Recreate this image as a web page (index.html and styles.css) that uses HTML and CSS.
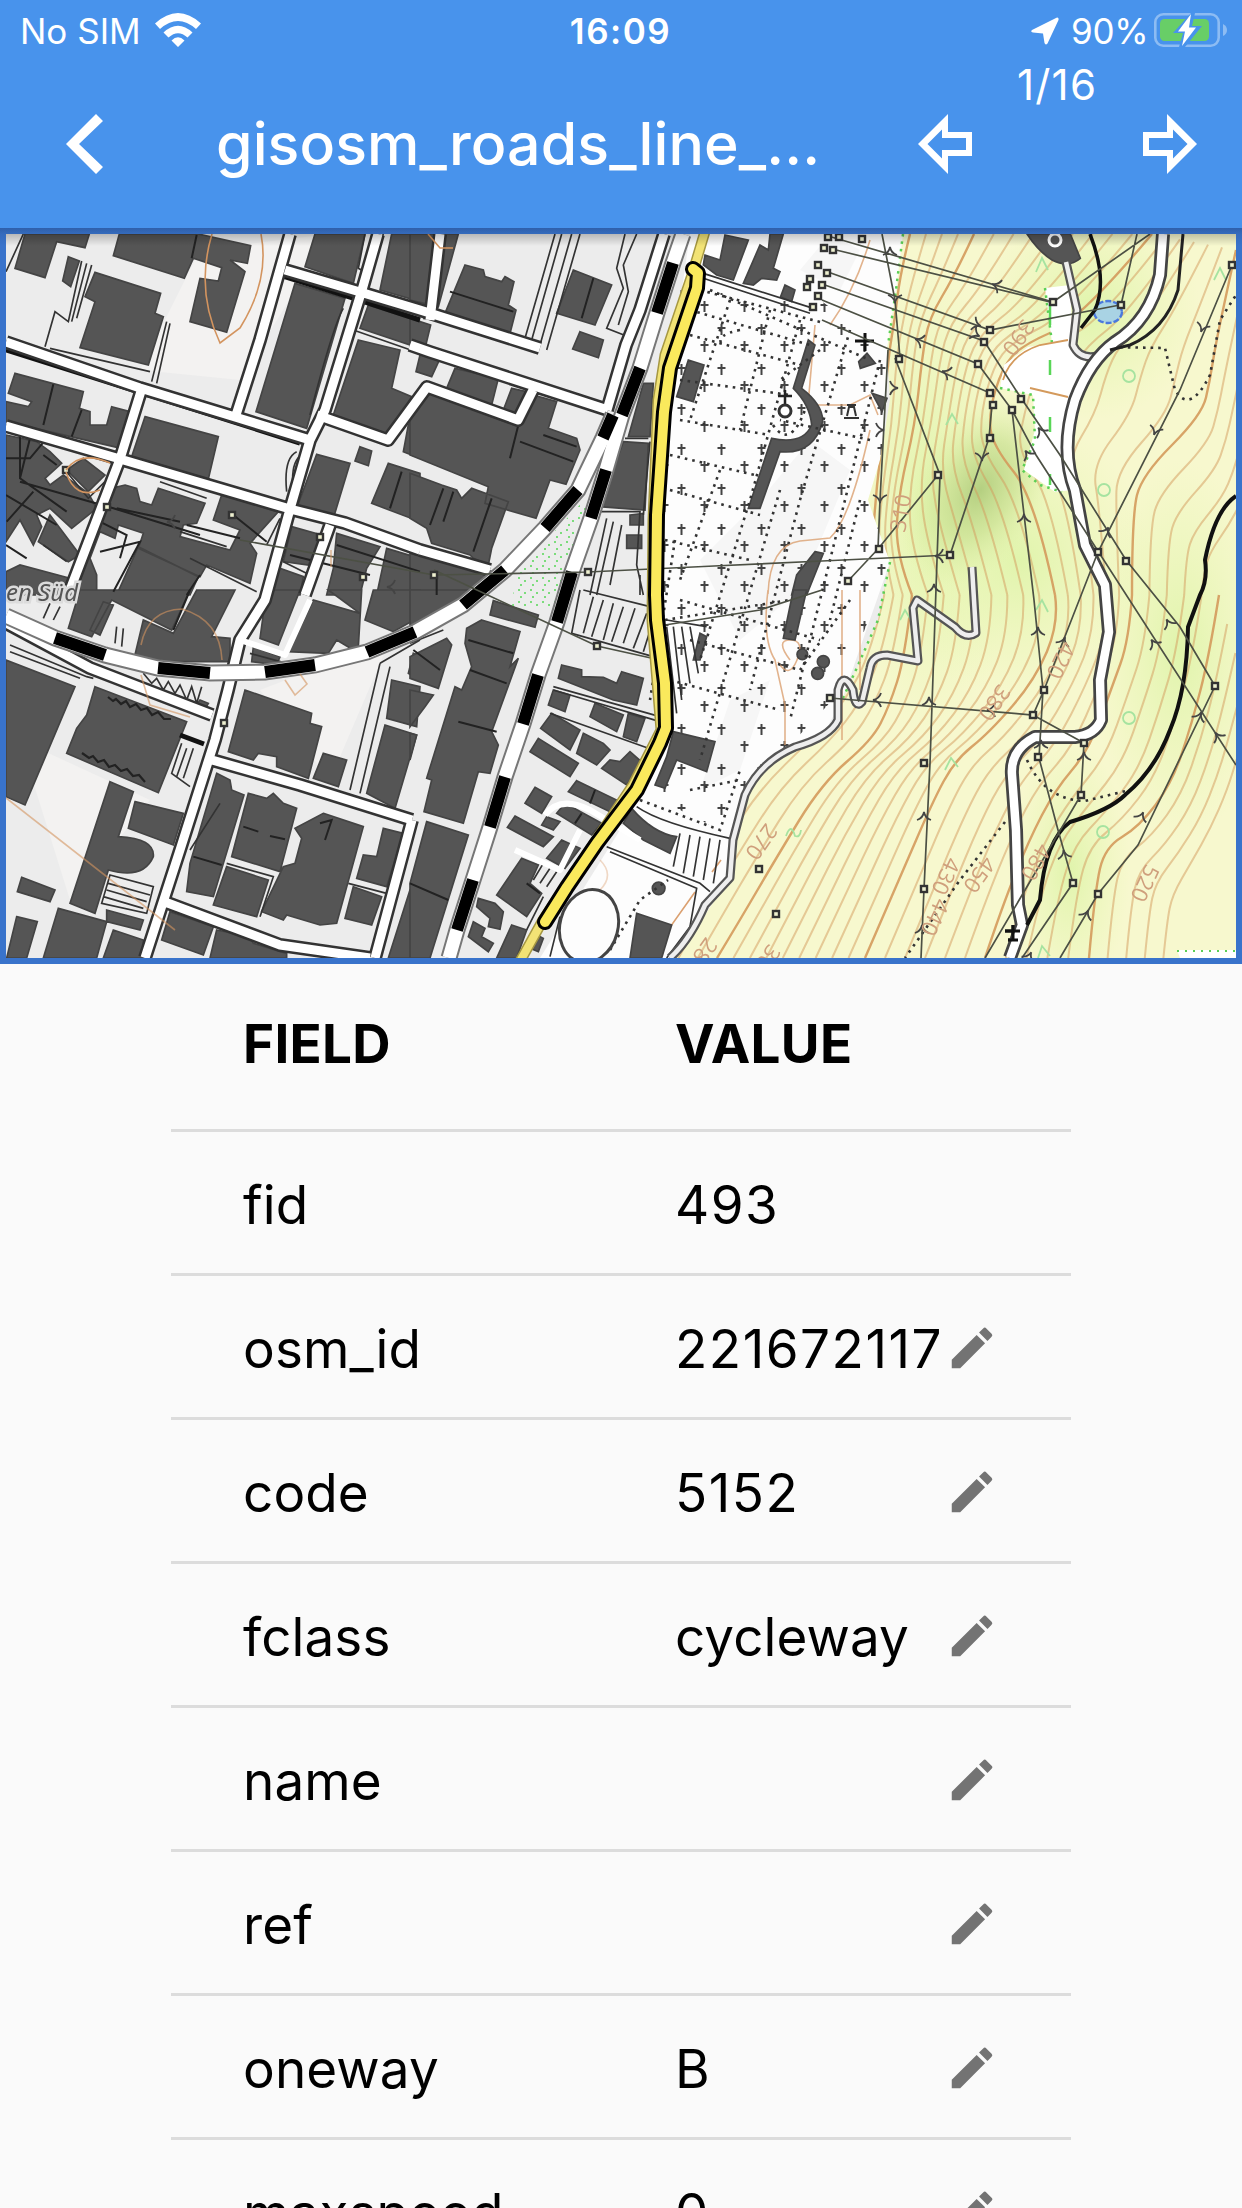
FILE: index.html
```html
<!DOCTYPE html>
<html lang="en">
<head>
<meta charset="utf-8">
<title>gisosm_roads_line</title>
<link rel="stylesheet" href="styles.css">
</head>
<body>
<header class="appbar">
  <div class="status">
    <div class="status-left">
      <span class="carrier">No SIM</span>
      <svg class="wifi" viewBox="0 0 46 34"><path d="M0 10.5Q23-10.500 46 10.500L41 16Q23 0 5 16ZM8.500 19.500Q23 6 37.500 19.500L32.500 24.500Q23 16 13.500 24.500ZM16.500 27.500Q23 21 29.500 27.500L23 34Z" fill="#fff"/></svg>
    </div>
    <span class="clock">16:09</span>
    <div class="status-right">
      <svg class="loc" viewBox="0 0 28 28"><path d="M1 13Q-1 15 2 15.500L12 16.500L13.500 26Q14.500 28.500 16.500 26.500L27.500 3Q28 0 25.500 .7Z" fill="#fff"/></svg>
      <span class="percent">90%</span>
      <svg class="battery" viewBox="0 0 74 34"><rect x="1.300" y="1.300" width="63.400" height="31.400" rx="8" fill="none" stroke="#8dbcf3" stroke-width="2.600"/><path d="M69 11Q73 13 73 17T69 23Z" fill="#8dbcf3"/><rect x="6" y="6" width="49" height="22" rx="4.500" fill="#68ce67"/><path d="M37 0L19 20H29L25 34H31L48 13H38L41 0Z" fill="#4893ec"/><path d="M37 1L24 18.500H31L28 33L42 14.500H35Z" fill="#fff"/></svg>
    </div>
  </div>
  <div class="nav">
    <svg class="back" viewBox="0 0 37 60"><path d="M0 30L30 0L37 7L13 30L37 53L30 60Z" fill="#fff"/></svg>
    <h1 class="title">gisosm_roads_line_...</h1>
    <svg class="arrow" viewBox="0 0 54 60"><path fill-rule="evenodd" d="M0 30L30 0V18H54V42H30V60ZM9.500 30L24 44.500V36H48V24H24V15.500Z" fill="#fff"/></svg>
    <svg class="arrow next" viewBox="0 0 54 60"><path fill-rule="evenodd" d="M54 30L24 0V18H0V42H24V60ZM44.500 30L30 44.500V36H6V24H30V15.500Z" fill="#fff"/></svg>
  </div>
  <span class="counter">1/16</span>
</header>

<section class="map-frame">
<svg class="map" viewBox="6 234 1230 724">
<defs>
  <pattern id="crosses" x="717" y="364" width="40" height="40" patternUnits="userSpaceOnUse"><path d="M4.500 0V11M0.500 4H8.500M27.500 17V28M23.500 21H31.500" stroke="#444" stroke-width="2" fill="none"/></pattern>
  <pattern id="scrub" width="12" height="12" patternUnits="userSpaceOnUse"><path d="M2 2h2M8 5h2M4 9h2" stroke="#7bdc7b" stroke-width="1.800"/></pattern>
  <radialGradient id="hill"><stop offset="0" stop-color="#b4cf80"/><stop offset=".5" stop-color="#cce295" stop-opacity=".75"/><stop offset="1" stop-color="#dff0a8" stop-opacity="0"/></radialGradient>
  <radialGradient id="lush"><stop offset="0" stop-color="#e0f4ac"/><stop offset="1" stop-color="#e8f6b4" stop-opacity="0"/></radialGradient>
  <linearGradient id="shade" x2="0" y2="1"><stop offset="0" stop-opacity=".22"/><stop offset="1" stop-opacity="0"/></linearGradient>
  <clipPath id="woodclip"><path id="woodshape" d="M903 234L896 290L887 349L890 400L880 460L868 500L882 540L890 562L878 620L855 672L842 700L838 725L822 737L795 747L770 758L748 790L735 830L728 880L705 915L673 958H1236V234Z"/></clipPath>
  <g id="node"><rect x="-3" y="-3" width="6" height="6" fill="#eef0d0" stroke="#333" stroke-width="2.400"/></g>
  <g id="chev"><path d="M-7 5Q-1 3 0-3Q1 3 7 5" fill="none" stroke="#444" stroke-width="1.800"/></g>
</defs>
<rect x="6" y="234" width="1230" height="724" fill="#ececec"/>
<path d="M200 250L330 234L240 380L140 370ZM20 740L150 800L70 900ZM260 690L390 640L330 780Z" fill="#f3f2f1"/>
<path d="M690 234H910L888 349L880 500L890 562L842 700L822 737L770 758L735 830L728 880L673 958H540L645 790L668 728L657 620L658 500L670 370Z" fill="#fdfdfd"/>
<path d="M760 500L810 440L850 470L800 590L740 640L700 560ZM730 700L770 680L740 770L700 790ZM830 234L860 250L840 290L800 270Z" fill="#f6f6f6"/>
<path d="M680 290L820 300L888 350L880 500L890 562L842 690L790 745L745 790L730 835L660 800L672 740L657 610L660 510Z" fill="url(#crosses)"/>
<path d="M592 492L574 545L556 606H512L516 572Z" fill="url(#scrub)"/>

<!-- woodland and contours -->
<use href="#woodshape" fill="#f7f8ce"/>
<g clip-path="url(#woodclip)">
  <ellipse cx="930" cy="500" rx="85" ry="240" fill="url(#lush)"/>
  <ellipse cx="1090" cy="310" rx="110" ry="110" fill="url(#lush)"/>
  <ellipse cx="1020" cy="560" rx="130" ry="140" fill="url(#lush)"/>
  <ellipse cx="1180" cy="650" rx="90" ry="190" fill="url(#lush)"/>
  <ellipse cx="1070" cy="870" rx="60" ry="130" fill="url(#lush)"/>
  <ellipse cx="980" cy="490" rx="65" ry="105" fill="url(#hill)" transform="rotate(30 980 490)"/>
  <g id="contours" fill="none" stroke="#d49a5c"></g>
</g>
<path d="M1045 288L1070 285L1073 345L1085 358L1088 372L1066 430L1066 475L1072 490L1055 492L1024 470L1035 430L1033 395L1000 388L1004 365L1028 347L1052 343Z" fill="#fff"/>
<path d="M1045 288L1052 343M1000 388L1033 395L1035 440L1022 470L1040 485L1062 492M903 234L896 290L888 345M890 562L878 620L855 672L842 700" fill="none" stroke="#5ccf55" stroke-width="2.500" stroke-dasharray="2.500 5"/>
<path d="M1050 305V325M1050 360V375M1050 417V432M1050 474V485" stroke="#59d657" stroke-width="2.500"/>
<path d="M1003 380Q1010 355 1040 345L1068 340M1030 388L1068 397" fill="none" stroke="#d49a5c" stroke-width="1.800"/>
<path d="M1177 950H1236V958H1180Z" fill="#fff"/><path d="M1177 951H1236" stroke="#5ccf55" stroke-width="2" stroke-dasharray="2 6"/>
<g fill="none" stroke="#dba070" stroke-width="1.600">
  <path d="M815 325L808 405H850L870 395L878 415M768 594Q770 545 800 541L830 538Q850 520 870 430M768 590Q762 640 775 660L785 705V745M790 660Q775 640 790 640T797 660T778 662M870 240Q855 290 830 325M842 590V740M860 590V690" stroke-opacity=".8"/>
  <path d="M600 860Q615 875 600 890Q580 930 560 925" stroke-opacity=".4"/><path d="M721 860L712 872M695 892L668 930L660 958"/>
</g>
<ellipse cx="1108" cy="312" rx="14" ry="11" fill="#a9d3e4" stroke="#4a78dd" stroke-width="2.400" stroke-dasharray="6 2"/>
<g fill="none" stroke="#a6e3a0" stroke-width="1.800"><circle cx="1129" cy="376" r="6"/><circle cx="1104" cy="490" r="6"/><circle cx="1129" cy="718" r="6"/><circle cx="1103" cy="832" r="6"/><path d="M1214 280L1220 268L1226 280M1036 272L1042 258L1048 270M946 425L952 414L958 424M1036 610L1042 600L1048 612M900 620L905 610L911 620M786 836q5-14 9 0q5 2 6-6M945 770l6-12 7 9M1038 958l4-12 8 10"/></g>

<!-- buildings -->
<g class="bld" transform="translate(0 225) scale(.33333)">
  <path d="M75 27H268L255 68L170 50L135 158L45 130ZM205 95L238 108L212 185L188 168ZM358 27H595L752 62L742 115L690 105L735 140L680 322L570 290L600 160L655 168L665 128L580 100L553 160L340 92ZM285 142L482 205L465 265L490 275L445 420L240 368L285 230L255 215ZM945 27H1095L1060 175L915 125ZM1175 27H1260V230L1140 195ZM1105 240L1260 290V370L1080 310ZM885 175L1035 220L920 610L768 560ZM1075 345L1200 375L1175 490L1235 515L1165 635L1000 570ZM45 445L250 500L238 550L270 560L270 600L320 600L335 545L390 560L355 668L18 590V530L85 545L95 530L25 505ZM435 575L655 635L625 762L395 695ZM950 688L1050 715L1000 880L890 850ZM1080 665L1115 678L1105 722L1065 708ZM1165 715L1260 745V890L1115 835ZM1225 600L1260 560V700L1210 680Z"/>
  <path d="M18 630L110 650L150 680L185 715L135 760L150 780L190 750L265 805L290 850L215 910L150 850L110 870L125 905L100 960L60 885L18 950ZM200 735L250 700L315 750L265 800ZM375 780L410 790L420 830L455 840L475 790L615 835L590 895L550 900L540 935L690 975L720 915L640 885L665 810L835 860L750 955L770 985L750 1075L620 1020L600 1055L415 970L430 925L355 900L345 940L300 920L270 1000L290 1050V1110H18V1040L60 1020L210 1060L290 880L335 790ZM150 870L240 990L205 1010L115 950ZM875 905L965 930L925 1020L850 1010ZM1010 925L1140 965L1100 1030L1080 1110H980L1000 1030ZM1160 970L1260 1000V1110H1130ZM840 1030L910 1055L900 1110H800ZM415 965L595 1055L570 1110H350Z"/>
</g>
<g class="bld" transform="translate(410 225) scale(.33333)">
  <path d="M0 27H145L85 245L0 225ZM165 120L220 135L225 155L275 170L285 155L312 170L295 240L318 255L300 325L105 265ZM0 280L62 300L45 370L0 355ZM490 135L605 180L555 300L440 265ZM510 320L580 345L565 398L488 372ZM30 390L88 405L65 455L18 440ZM135 430L265 460L245 540L110 490ZM305 490L350 500L325 575L280 555ZM370 510L440 530L415 610L500 640L510 675L468 778L420 765L378 880L225 835L235 785L0 690V560L50 500L325 605ZM0 745L95 780L140 795L155 820L185 790L295 830L245 970L235 1020L190 1000L180 990L65 955L50 910L0 880ZM945 30L1015 45L970 165L920 150L880 120L885 90L930 105ZM1080 27H1120L1090 130L1110 140L1100 165L1055 160L1030 180L1000 175L1050 60L1075 75ZM1125 180L1155 195L1145 230L1112 215ZM1195 345L1215 360L1175 490Q1240 540 1238 590Q1210 690 1110 680L1050 850H1015L1085 640Q1180 660 1205 600Q1200 540 1150 490ZM835 405L882 420L850 530L800 515ZM700 475H730L720 635H655ZM640 650L715 655L705 855L570 845ZM660 870L700 865V900H660ZM650 930H695V970H650ZM1215 980L1240 985L1190 1110H1145L1160 1050ZM0 985L270 1045L200 1110H0Z"/>
</g>
<g class="bld" transform="translate(822 225) scale(.33333)"><path d="M615 27H745L775 100Q740 130 690 105Q650 80 615 27ZM110 410L135 385L160 415L115 430ZM150 505L195 520L180 560Z"/></g>
<g class="bld" transform="translate(0 590) scale(.33333)">
  <path d="M240 0H570L515 120L335 30L275 140L205 115ZM590 0H705L635 140L690 145V215H400L430 90L520 130ZM310 35L340 45L300 135L270 120ZM800 0H900L835 165L780 145ZM985 0H1085L1075 170L1060 180L1010 150L985 190L865 185L940 30L1080 70ZM1120 0H1260V80L1180 125L1095 90ZM18 210L225 290L75 645L18 620ZM285 290L560 395L475 608L200 490L230 415L260 375ZM330 575L400 605L355 740Q465 745 460 800Q430 870 325 840L285 970L210 940ZM405 635L550 670L520 765L385 715ZM65 862L165 900L150 935L52 905ZM50 980L112 995L80 1104H20ZM175 955L320 995L290 1104H130ZM320 960L430 990L420 1020L320 995ZM735 300L935 370L930 400L965 410L925 565L830 530V500L775 490L760 510L685 485ZM970 490L1040 510L1015 590L940 565ZM1175 270L1260 290L1250 410L1160 385ZM1155 405L1250 435L1185 655L1100 610ZM650 550L690 570L695 600L732 615L640 920L560 905L570 820ZM745 610L800 625L820 610L850 640L890 655L840 845L695 800ZM680 830L805 870L770 980L640 945ZM970 670L1090 710L1010 1000L960 1005L860 975L850 990L785 965L850 830L885 820L905 745L885 715ZM1150 715L1210 730L1160 890L1070 865L1090 795L1130 800ZM1060 890L1145 920L1115 1005L1035 985ZM1230 900L1260 890V1104H1165ZM510 965L640 1010L610 1095L485 1050ZM650 1020L750 1040L760 1060L860 1090V1104H630ZM340 1020L430 1050V1104H310ZM1240 190L1260 200V270L1225 250ZM600 330L625 340L610 365L585 350ZM760 170L840 200L830 225L755 215Z"/>
</g>
<g class="bld" transform="translate(410 590) scale(.33333)">
  <path d="M0 0H240L160 45L0 110ZM250 32L385 75L375 112L240 75ZM215 90L330 125L300 230L325 205L245 425L265 465L240 550L205 545L160 700L42 665L65 570L50 565L135 290L155 300L185 230L165 160L170 115ZM0 200L110 145L125 165L85 295L0 265ZM0 300L70 315L45 350L0 410ZM0 430L20 435L0 510ZM50 695L175 735L60 1104H0V880ZM455 225L515 240V260L580 262L620 280L635 245L700 265L680 345L610 330L445 265ZM430 300L480 315L465 365L415 345ZM555 340L640 375L620 425L540 380ZM655 370L705 385L680 455L640 440ZM425 370L510 420L480 480L392 415ZM520 430L580 460L600 480L560 525L500 490ZM385 445L505 520L480 560L360 485ZM660 485L700 520L650 585L575 535L600 510L630 515ZM375 592L425 620L395 670L345 640ZM500 572L640 640L620 675L475 605ZM465 640L575 700L545 735L440 670ZM315 678L430 740L400 770L292 712ZM410 680L450 695L430 720L395 705ZM455 750L510 775L465 835L410 805ZM335 805L385 825L360 880L395 910L350 980L260 915ZM205 925L255 940L280 965L270 1018L235 1010L240 985L200 950ZM190 995L225 1015L215 1040L250 1060L235 1085L175 1040ZM305 1005L350 1020L320 1104H260ZM790 425L915 455L890 545L800 510L765 595L735 585L770 500ZM665 655Q730 730 800 740L780 790L700 750L640 700ZM680 970L785 1005L755 1104H660ZM370 1030L400 1045L385 1085L360 1075ZM1150 0H1190L1155 150L1120 145ZM870 130L890 140L870 210H850Z"/>
  <circle cx="1177" cy="193" r="16"/><circle cx="1240" cy="215" r="18"/><circle cx="1223" cy="250" r="18"/><circle cx="746" cy="895" r="19"/>
</g>

<!-- building partitions -->
<g class="part" fill="none">
  <path transform="translate(0 225) scale(.33333)" d="M160 478L130 600M245 555L215 635M590 30L575 100M60 635V760L200 860M18 700H90L140 640M18 810L170 900M90 640L60 760M60 770L340 850L600 930M280 880L380 930L360 1000M350 850L540 890M300 980L420 950L340 1100M560 900L720 940M600 1050L560 1110M1205 740L1170 850M1010 960L1260 1040M870 990L1110 1050M18 960L80 1000M100 800L20 890M130 690L170 720M700 870L800 950"/>
  <path transform="translate(410 225) scale(.33333)" d="M120 200L310 260M550 160L515 280M330 650L490 710M400 630L500 665M325 600L300 700M130 800L100 890M100 790L60 900M245 820L190 980M80 1050V1110"/>
  <path transform="translate(0 590) scale(.33333)" d="M570 0L520 120M580 800L665 825M730 710L775 725M810 738L855 748M960 700L995 690L975 750"/>
  <path transform="translate(410 590) scale(.33333)" d="M175 150L310 190M180 240L290 280M145 395L260 425M0 880L115 930M10 180L90 240M555 600L540 640M515 670L495 700M350 880L390 910"/>
</g>
<g fill="none" stroke="#111" stroke-width="5"><path d="M6 350L300 443M283 276L350 297L420 320M180 735L204 744"/></g>
<path d="M108 697l5 4 3-2 5 5 5-3 4 6 6-3 5 6 6-2 5 7 6-3 6 7 7 0M82 753l7 5 4-2 5 6 6-2 5 7 6-2 6 6 6-2 6 7 6-1 6 7" fill="none" stroke="#222" stroke-width="2.200"/>

<!-- minor lines, car parks -->
<g class="thin" fill="none">
  <path transform="translate(0 225) scale(.33333)" d="M245 108L205 290L165 260L135 365M260 115L215 290M275 120L230 280M500 290L455 470M510 295L470 475M150 370L450 440M480 750L640 800M480 770L620 820M18 140L70 27M1060 315L1260 385M860 800Q850 700 890 680M880 800Q870 710 905 690M930 570Q1000 300 1030 250M200 740L265 820L315 770M130 960L200 1010M1095 27L1075 130L1110 150L1150 27M540 920L680 965M570 1000L770 1100M800 960L840 880M850 1010L930 1050"/>
  <path transform="translate(410 225) scale(.33333)" d="M435 27L345 340M455 27L365 345M485 27L390 360M510 27L410 375M645 27L620 130L640 190L590 310L655 335M680 27L640 120L655 200L625 300M720 650L700 870M645 640H715M590 880L540 1110M610 890L560 1110M635 900L600 1080M570 860H690L680 1020L700 1110M690 1050V1110M880 145L1210 250M880 160L1200 265"/>
  <path transform="translate(0 590) scale(.33333)" d="M30 165L260 260L280 265M30 185L240 265M350 110L345 160M370 115L365 170M150 40L130 85M180 50L160 90M430 250L455 280L470 265L490 300L505 275L525 310L540 285L560 330L575 290L590 340L605 290M545 460L515 550L570 590M560 475L530 560M580 475L550 565M330 855L460 890L440 970L305 940ZM325 880L450 915M320 900L440 935M310 920L430 955M1140 220L1050 600M1170 230L1080 610M1140 220L1260 150M660 640L570 780M750 190L860 220M680 820L820 860L780 980M1045 880L1160 910"/>
  <path transform="translate(410 590) scale(.33333)" d="M510 0L485 130L730 200M550 20L520 130M580 30L545 140M610 40L580 150M640 50L605 155M675 55L640 160M710 70L670 175M730 90L700 185M520 0L720 50M770 110L800 370M790 110L815 330M815 110L840 280M840 110L865 250M770 90L890 110M430 290L750 380M420 370L730 480M430 300L740 392M590 770L870 880L900 905M600 785L860 895L840 1010L770 1104M680 650Q750 700 960 745M810 730L790 830M840 735L820 850M870 740L850 860M900 745L880 870M930 750L910 880M0 160L100 120M350 1020L400 920M420 1100L450 980M370 870L400 820M390 880L420 835M410 890L440 845"/>
</g>

<!-- streets -->
<g class="streets" fill="none">
  <g id="st">
    <path d="M6 342L140 388L235 417L310 440M6 426L120 459L290 509L345 523L420 550M290 234L260 340L236 415M285 270L360 292L420 310L540 348M378 234L362 290L325 410L310 440L290 509L265 600L240 640L228 690L215 740L180 850L145 958M142 388L120 459L70 590M410 345L430 352L608 410M440 234L430 320M317 415L388 440L427 387L518 420L533 390M6 623L90 668L212 715M212 760L300 785L412 820M165 902L280 945L370 958M412 820L375 958M330 525L305 595M420 550L490 570M664 234L640 310L626 345L607 410"/>
  </g>
  <use href="#st" class="inner"/>
  <path class="alley" d="M240 640L285 655L310 600M545 815Q560 795 590 810L640 840M515 850L560 870L580 830"/>
</g>

<!-- cemetery paths -->
<g fill="none" stroke="#333" stroke-width="2.600" stroke-dasharray="2.600 5">
  <path d="M700 290L820 322M690 310L810 345M690 335L800 365M680 380L790 395M680 420L770 435M670 455L755 475M670 490L760 515M665 540L750 560M680 600L820 640M690 640L800 670M670 680L780 710M665 620L790 600M730 300L690 420M770 310L740 430M800 320L750 500L700 660M850 330L800 500L750 690M880 360L830 560L790 720M720 470L680 580M780 490L700 760M860 500L830 620M870 440L780 420M740 330q-25 5-18 15M675 540L650 700M820 350L780 380M800 670L850 600M710 290L870 360M690 790L740 780M640 800L720 830L740 770M610 950L640 900L668 880"/>
  <path d="M773 425Q790 450 805 410M1105 347L1165 348L1175 390Q1190 415 1210 375L1220 320L1236 295M1027 760Q1045 800 1085 801L1130 790M1005 822L960 880L905 958"/>
</g>
<path d="M785 390V405M778 396H792" stroke="#222" stroke-width="2.500"/><circle cx="785" cy="411" r="6" fill="#fff" stroke="#333" stroke-width="3"/>
<path d="M865 333V351M855 341H874M1013 925V941M1005 931H1020M1008 940H1018" stroke="#111" stroke-width="3"/>
<path d="M844 418h15M847 416l2-9h5l2 9M847 405h9" fill="none" stroke="#333" stroke-width="2"/>
<circle cx="1055" cy="240" r="6" fill="#555" stroke="#fff" stroke-width="3"/>

<!-- railways -->
<g fill="none">
  <g class="rail"><path id="r1" d="M683 234L673 263L657 313L640 368L622 415L606 470L591 518L572 572L557 622L538 675L523 724L505 777L490 827L473 880L457 930L449 958"/><path id="r2" d="M6 616L55 638L105 655L158 668L210 673L265 672L315 665L367 652L415 632L463 605L505 570L545 528L578 490L603 438L613 415"/></g>
  <g class="railbed"><use href="#r1"/><use href="#r2"/></g>
  <path class="sleep" d="M673 263L657 313M640 368L622 415M606 470L591 518M572 572L557 622M538 675L523 724M505 777L490 827M473 880L457 930M55 638L105 655M158 668L210 673M265 672L315 665M367 652L415 632M463 605L505 570M545 528L578 490M603 438L613 415"/>
</g>

<!-- hill roads -->
<g fill="none" stroke-linejoin="round">
  <g stroke="#555" stroke-width="9"><path id="hr" d="M972 567L976 633Q966 640 955 627L917 600L913 608L918 661L887 655Q872 655 870 668L862 702Q855 710 853 690Q843 670 838 690L838 720Q830 737 795 747Q760 762 745 795L733 840L730 878L705 905Q690 940 670 958M1066 262L1077 310L1073 345Q1080 360 1097 356"/></g><use href="#hr" stroke="#eee" stroke-width="4.500"/>
  <g stroke="#444" stroke-width="14"><path id="mr" d="M1163 234L1160 275Q1150 320 1115 342Q1090 360 1075 400Q1060 450 1075 490L1085 545L1105 585L1109 632L1100 680L1101 720Q1095 735 1075 737L1035 737Q1010 750 1012 775L1016 830L1018 905L1022 925L1010 958"/></g><use href="#mr" stroke="#fff" stroke-width="8.500"/>
  <path d="M1090 234Q1108 280 1095 310L1081 328" stroke="#111" stroke-width="3.500"/><path d="M1183 234L1178 290Q1165 330 1130 345L1110 350" stroke="#222" stroke-width="3"/>
  <path d="M1236 496Q1215 510 1205 560Q1208 580 1200 595L1188 627Q1187 690 1170 730Q1155 770 1125 795Q1110 810 1070 822Q1045 840 1040 900L1027 925" stroke="#111" stroke-width="4"/>
</g>
<path d="M1013 925V941M1005 931H1020M1008 940H1018" stroke="#111" stroke-width="3"/>
<ellipse cx="589" cy="926" rx="29" ry="37" transform="rotate(15 589 926)" fill="#fdfdfd" stroke="#444" stroke-width="3"/>

<!-- power lines -->
<g fill="none" stroke="#4c5044" stroke-width="1.700">
  <path d="M828 236L1053 302M832 249L1050 302M828 272L990 330L1120 305M822 284L984 341L1021 398L1060 455L1126 560L1180 627L1215 686M822 300L978 364L1012 410L1036 455L1236 765M822 320L990 393M895 358L940 475L937 560L930 763L924 889L921 958M888 350L880 500L878 549L848 581M822 561L950 555M938 475L878 549M992 405L989 438L950 555M1012 410L1020 480L1034 600L1043 690L1039 758L1058 830L1073 883L1022 958M1232 265L1180 390L1098 552L1044 690L1033 715L830 698M1033 715L1084 743L1081 795L985 958M1215 686L1138 845L1098 894L1060 958M1053 302L1150 234M1137 234L1121 305M882 234L895 300L900 358M434 575L588 572L714 566L822 561M434 570L597 646L660 660M240 540L434 575M665 625L760 610L822 590"/>
</g>
<g id="marks"></g>

<!-- labels -->
<g class="elev"><text transform="translate(1023 318) rotate(125)">390</text><text transform="translate(905 533) rotate(-80)">310</text><text transform="translate(766 822) rotate(125)">270</text><text transform="translate(706 936) rotate(125)">280</text><text transform="translate(769 943) rotate(125)">300</text><text transform="translate(999 683) rotate(125)">380</text><text transform="translate(1062 640) rotate(115)">420</text><text transform="translate(947 856) rotate(115)">430</text><text transform="translate(984 855) rotate(125)">450</text><text transform="translate(936 897) rotate(115)">440</text><text transform="translate(1039 842) rotate(120)">480</text><text transform="translate(1146 863) rotate(115)">520</text></g>
<g fill="none" stroke="#d3945f" stroke-width="1.600"><path d="M212 234Q195 290 220 343L240 328Q270 280 261 234M66 470Q80 450 110 463M66 472Q75 500 100 490M428 234L440 248L453 248"/><path d="M141 645Q148 610 182 609Q220 620 222 660M141 675L150 705L190 717M285 680L295 695L307 684L300 674M6 798L175 930M331 550V567" stroke-opacity=".6"/></g>
<text class="place" x="6" y="601">en Süd</text>

<!-- selected way -->
<g fill="none" stroke-linejoin="round" stroke-linecap="round">
  <path d="M706 228L692 275L665 355L658 400L653 520L652 620L661 730L633 785L543 920L518 965" stroke="#a69842" stroke-width="11"/>
  <path d="M706 228L692 275L665 355L658 400L653 520L652 620L661 730L633 785L543 920L518 965" stroke="#f2e375" stroke-width="8"/>
  <path class="way-edge" d="M693 269L698 273L697 288L670 368L664 412L657 515L656 595L657 620L665 683L666 728L660 743L637 790L597 843L567 887L545 922"/>
  <path class="way" d="M693 269L698 273L697 288L670 368L664 412L657 515L656 595L657 620L665 683L666 728L660 743L637 790L597 843L567 887L545 922"/>
</g>
<rect x="6" y="234" width="1230" height="12" fill="url(#shade)"/>
</svg>
</section>

<main class="table">
  <div class="row head"><span>FIELD</span><span>VALUE</span></div>
  <div class="row"><span>fid</span><span class="num">493</span></div>
  <div class="row"><span>osm_id</span><span class="num">221672117</span><svg class="edit" viewBox="0 0 24 24"><path id="pencil" d="M3 17.250V21h3.750L17.810 9.940l-3.750-3.750L3 17.250zM20.710 7.040a1 1 0 0 0 0-1.410l-2.340-2.340a1 1 0 0 0-1.410 0l-1.830 1.830 3.750 3.750 1.830-1.830z"/></svg></div>
  <div class="row"><span>code</span><span class="num">5152</span><svg class="edit" viewBox="0 0 24 24"><use href="#pencil"/></svg></div>
  <div class="row"><span>fclass</span><span>cycleway</span><svg class="edit" viewBox="0 0 24 24"><use href="#pencil"/></svg></div>
  <div class="row"><span>name</span><span></span><svg class="edit" viewBox="0 0 24 24"><use href="#pencil"/></svg></div>
  <div class="row"><span>ref</span><span></span><svg class="edit" viewBox="0 0 24 24"><use href="#pencil"/></svg></div>
  <div class="row"><span>oneway</span><span>B</span><svg class="edit" viewBox="0 0 24 24"><use href="#pencil"/></svg></div>
  <div class="row"><span>maxspeed</span><span class="num">0</span><svg class="edit" viewBox="0 0 24 24"><use href="#pencil"/></svg></div>
</main>
<script src="map.js"></script>
</body>
</html>
```
FILE: styles.css
```css
* { box-sizing: border-box; }
body { margin: 0; width: 1242px; height: 2208px; overflow: hidden; background: #fafafa; color: #000; font-family: Inter, "Liberation Sans", sans-serif; }
svg { display: block; }

.appbar { position: relative; height: 228px; background: #4893ec; color: #fff; }
.status { display: grid; grid-template-columns: 1fr auto 1fr; height: 60px; padding: 0 14px 0 20px; font-size: 35px; line-height: 63px; }
.status-left { display: flex; align-items: flex-start; }
.carrier { width: 135px; white-space: nowrap; }
.wifi { width: 46px; height: 34px; margin-top: 13px; }
.clock { font-weight: 600; letter-spacing: 1.5px; margin-left: -7px; }
.status-right { display: flex; justify-content: flex-end; align-items: flex-start; }
.loc { width: 28px; height: 28px; margin: 17px 12px 0 0; }
.percent { width: 83px; white-space: nowrap; letter-spacing: -.3px; }
.battery { width: 74px; height: 34px; margin-top: 13px; }
.nav { display: flex; align-items: center; height: 168px; padding: 0 45px 0 66px; }
.back { width: 37px; height: 60px; }
.title { width: 631px; margin: 0 71px 0 113px; font-size: 59px; font-weight: 500; line-height: 80px; letter-spacing: .1px; white-space: nowrap; }
.arrow { width: 54px; height: 60px; flex: none; }
.next { margin-left: 171px; }
.counter { position: absolute; left: 1017px; top: 60px; font-size: 42px; line-height: 50px; letter-spacing: 1.2px; }

.map-frame { height: 736px; padding: 6px; background: linear-gradient(#2f60ab, #356bbd 6px, #3973cb 18px); }
.map { width: 1230px; height: 724px; filter: blur(.5px); }
.bld { fill: #555; stroke: #444; stroke-width: 5px; }
.part { stroke: #222; }
.part path { stroke-width: 6px; }
.thin { stroke: #333; }
.thin path { stroke-width: 5px; }
.streets { stroke: #333; stroke-width: 14px; stroke-linejoin: round; }
.streets .inner { stroke: #fff; stroke-width: 9px; }
.streets .alley { stroke: #fff; stroke-width: 6px; }
.rail { stroke: #777; stroke-width: 17px; }
.railbed { stroke: #fff; stroke-width: 13px; }
.sleep { stroke: #000; stroke-width: 12px; }
.way-edge { stroke: #000; stroke-width: 16px; }
.way { stroke: #fae95c; stroke-width: 10px; }
.elev { font: 22px "Open Sans", sans-serif; fill: #cf9f7c; }
.place { font: italic 24px "Noto Sans", sans-serif; fill: #555; stroke: #dcdcdc; stroke-width: 5px; paint-order: stroke; }

.table { width: 900px; margin: 0 auto; font-size: 53px; }
.row { display: grid; grid-template-columns: 432px 270px 54px; align-items: center; height: 144px; padding: 0 72px; border-bottom: 3px solid #dcdcdc; line-height: 64px; white-space: nowrap; }
.row span { padding-top: 5px; letter-spacing: .1px; }
.row .num { letter-spacing: 1.5px; }
.row.head { height: 168px; font-weight: 700; }
.row.head span { padding: 0 0 5px; letter-spacing: .3px; }
.edit { width: 54px; height: 54px; margin-top: 2px; fill: #737373; }
```
FILE: map.js
```js
const NS = 'http://www.w3.org/2000/svg';

// Index contours, bottom to top; lines between neighbours are interpolated.
const lower = [
  [[640,958],[670,900],[700,850],[740,790],[790,740],[830,700],[860,650],[875,595]],
  [[717,958],[740,920],[775,860],[822,783],[872,740],[889,707],[905,657],[912,595]],
  [[865,958],[899,880],[932,803],[955,760],[989,733],[1035,680],[1059,623],[1055,595]],
  [[985,958],[1002,907],[1029,840],[1055,790],[1089,750],[1112,687],[1129,640],[1132,595]],
  [[1089,958],[1095,890],[1105,847],[1139,827],[1172,783],[1192,723],[1209,657],[1219,595]],
  [[1182,958],[1185,930],[1189,907],[1205,870],[1220,840],[1236,807],[1245,780],[1260,740]]
];
const upper = [
  [[875,595],[872,552],[876,492],[884,425],[888,358],[895,318],[900,275],[910,234]],
  [[912,595],[895,552],[899,492],[915,425],[922,358],[929,318],[955,275],[974,234]],
  [[1055,595],[1035,498],[992,445],[989,412],[1002,368],[1022,345],[1080,320],[1152,234]],
  [[1132,595],[1132,515],[1142,475],[1202,415],[1210,380],[1215,348],[1225,300],[1236,250]],
  [[1219,595],[1222,585],[1228,570],[1236,552],[1250,530],[1260,500],[1270,450],[1280,400]]
];
const steps = [4, 9, 6, 5, 5];
const layer = document.getElementById('contours');

function smooth(p) {
  let d = `M${p[0]}`;
  for (let i = 1; i < p.length - 1; i++) {
    const end = i === p.length - 2 ? p[i + 1] : [(p[i][0] + p[i + 1][0]) / 2, (p[i][1] + p[i + 1][1]) / 2];
    d += `Q${p[i]} ${end}`;
  }
  return d;
}
for (const keys of [lower, upper]) {
  for (let k = 0; k < keys.length - 1; k++) {
    for (let s = 0; s < steps[k]; s++) {
      const t = s / steps[k];
      const pts = keys[k].map((a, i) => [a[0] + (keys[k + 1][i][0] - a[0]) * t, a[1] + (keys[k + 1][i][1] - a[1]) * t]);
      const path = document.createElementNS(NS, 'path');
      path.setAttribute('d', smooth(pts));
      path.setAttribute('stroke-width', s ? 2 : 2.4);
      path.setAttribute('stroke-opacity', s ? 0.5 : 0.9);
      layer.append(path);
    }
  }
}

// Pylons and direction ticks along the power lines.
const marks = document.getElementById('marks');
const put = (id, list) => list.forEach(([x, y, r = 0]) => {
  const u = document.createElementNS(NS, 'use');
  u.setAttribute('href', id);
  u.setAttribute('transform', `translate(${x} ${y}) rotate(${r})`);
  marks.append(u);
});
put('#node', [[828,237],[839,237],[862,239],[824,248],[833,250],[827,273],[818,265],[810,279],[807,287],[822,285],[818,296],[813,307],
  [1053,302],[990,330],[984,342],[978,364],[990,393],[993,405],[1021,399],[1012,410],[990,438],[938,475],[950,555],[879,549],[848,581],
  [899,359],[1121,305],[1232,265],[1098,552],[1126,561],[830,698],[1033,715],[1044,690],[1038,757],[1084,743],[1081,795],[924,763],[924,889],
  [1073,883],[1098,894],[1215,686],[759,869],[776,914],[434,575],[588,572],[597,646],[66,470],[107,507],[232,515],[320,537],[363,577],[224,723]]);
put('#chev', [[995,285,-70],[978,325,110],[977,335,120],[918,340,-70],[945,372,-70],[890,250,0],[895,300,180],[895,388,90],[881,430,90],[880,500,180],
  [982,458,180],[1024,517,0],[1040,430,-35],[1027,453,-35],[1202,329,200],[1155,432,200],[1107,530,30],[1168,622,-30],[1153,642,-35],[1217,735,-35],
  [938,556,-90],[934,587,0],[1038,630,0],[1064,640,20],[876,700,-90],[990,710,-90],[929,700,0],[924,815,0],[922,928,0],[1041,743,0],[1084,755,0],
  [1142,815,25],[1087,913,25],[1200,715,25],[1064,853,-10],[1030,955,25],[170,522,-90],[390,587,-90]]);
```
